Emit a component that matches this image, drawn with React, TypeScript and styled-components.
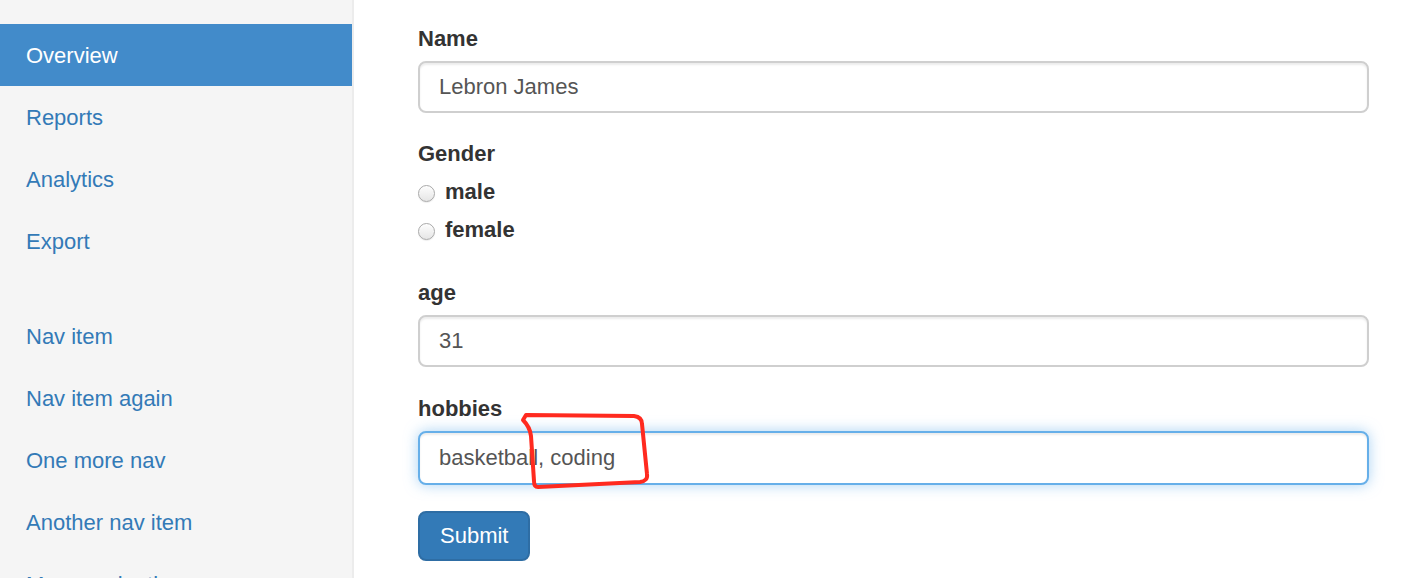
import React from "react";
import styled, { createGlobalStyle } from "styled-components";

const Global = createGlobalStyle`
  html, body { margin: 0; padding: 0; background: #fff; overflow: hidden; }
  body { font-family: "Liberation Sans", Arial, Helvetica, sans-serif; }
  * { box-sizing: border-box; }
`;

const Page = styled.div`
  position: relative;
  display: flex;
  width: 1408px;
  height: 578px;
  overflow: hidden;
`;

const Sidebar = styled.aside`
  width: 354px;
  flex: none;
  background: #f5f5f5;
  border-right: 2px solid #ececec;
  padding-top: 24px;
`;

const NavList = styled.ul<{ $gap?: number }>`
  list-style: none;
  margin: ${(p) => p.$gap ?? 0}px 0 0;
  padding: 0;
`;

const NavItem = styled.li<{ $active?: boolean }>`
  height: 62px;
  display: flex;
  align-items: center;
  padding: 2px 0 0 26px;
  font-size: 22px;
  background: ${(p) => (p.$active ? "#428bca" : "transparent")};
  color: ${(p) => (p.$active ? "#fff" : "#337ab7")};
  white-space: nowrap;
`;

const Main = styled.main`
  flex: 1;
  padding: 24px 39px 0 64px;
`;

const FormGroup = styled.div<{ $mb?: number }>`
  margin-bottom: ${(p) => p.$mb ?? 26}px;
`;

const Label = styled.label`
  display: block;
  font-size: 22px;
  line-height: 30px;
  font-weight: bold;
  color: #333;
  margin-bottom: 7px;
`;

const Input = styled.div<{ $focus?: boolean }>`
  height: ${(p) => (p.$focus ? 54 : 52)}px;
  display: flex;
  align-items: center;
  padding-left: 19px;
  font-size: 22px;
  color: #555;
  background: #fff;
  border: 2px solid ${(p) => (p.$focus ? "#66afe9" : "#cfcfcf")};
  border-radius: 8px;
  box-shadow: ${(p) =>
    p.$focus
      ? "inset 0 2px 2px rgba(0,0,0,.075), 0 0 14px rgba(102,175,233,.55)"
      : "inset 0 2px 2px rgba(0,0,0,.075)"};
`;

const RadioList = styled.div`
  padding: 4px 0 3px;
  margin-top: -7px;
`;

const RadioRow = styled.div`
  height: 38px;
  display: flex;
  align-items: center;
  gap: 10px;
  font-size: 22px;
  font-weight: bold;
  color: #333;
`;

const RadioDot = styled.span`
  width: 17px;
  height: 17px;
  border-radius: 50%;
  border: 1px solid #a9a9a9;
  background: linear-gradient(#fdfdfd, #e6e6e6);
  box-shadow: inset 0 1px 1px rgba(255,255,255,.8), 0 1px 1px rgba(0,0,0,.08);
  flex: none;
  margin-top: 2px;
`;

const SubmitButton = styled.button`
  height: 50px;
  padding: 0 20px;
  font-family: inherit;
  font-size: 22px;
  color: #fff;
  background: #337ab7;
  border: 2px solid #2e6da4;
  border-radius: 8px;
`;

const Annotation = styled.svg`
  position: absolute;
  left: 0;
  top: 0;
  pointer-events: none;
`;

const topNav = ["Overview", "Reports", "Analytics", "Export"];
const bottomNav = ["Nav item", "Nav item again", "One more nav", "Another nav item", "More navigation"];

export default function App() {
  return (
    <>
      <Global />
      <Page>
        <Sidebar>
          <NavList>
            {topNav.map((n, i) => (
              <NavItem key={n} $active={i === 0}>{n}</NavItem>
            ))}
          </NavList>
          <NavList $gap={33}>
            {bottomNav.map((n) => (
              <NavItem key={n}>{n}</NavItem>
            ))}
          </NavList>
        </Sidebar>
        <Main>
          <FormGroup>
            <Label>Name</Label>
            <Input>Lebron James</Input>
          </FormGroup>
          <FormGroup $mb={26}>
            <Label>Gender</Label>
            <RadioList>
              <RadioRow><RadioDot />male</RadioRow>
              <RadioRow><RadioDot />female</RadioRow>
            </RadioList>
          </FormGroup>
          <FormGroup $mb={27}>
            <Label>age</Label>
            <Input>31</Input>
          </FormGroup>
          <FormGroup>
            <Label>hobbies</Label>
            <Input $focus>basketball, coding</Input>
          </FormGroup>
          <SubmitButton>Submit</SubmitButton>
        </Main>
        <Annotation width="1408" height="578" viewBox="0 0 1408 578">
          <path
            d="M523 420 L526 415 L634 416 Q642 417 642 424 L647 474 Q648 481 640 482 L538 487 Q534 487 534 481 L531 436 Q530 427 523 420 Z"
            fill="none"
            stroke="#ff2a1f"
            strokeWidth="4"
            strokeLinejoin="round"
            strokeLinecap="round"
          />
        </Annotation>
      </Page>
    </>
  );
}
